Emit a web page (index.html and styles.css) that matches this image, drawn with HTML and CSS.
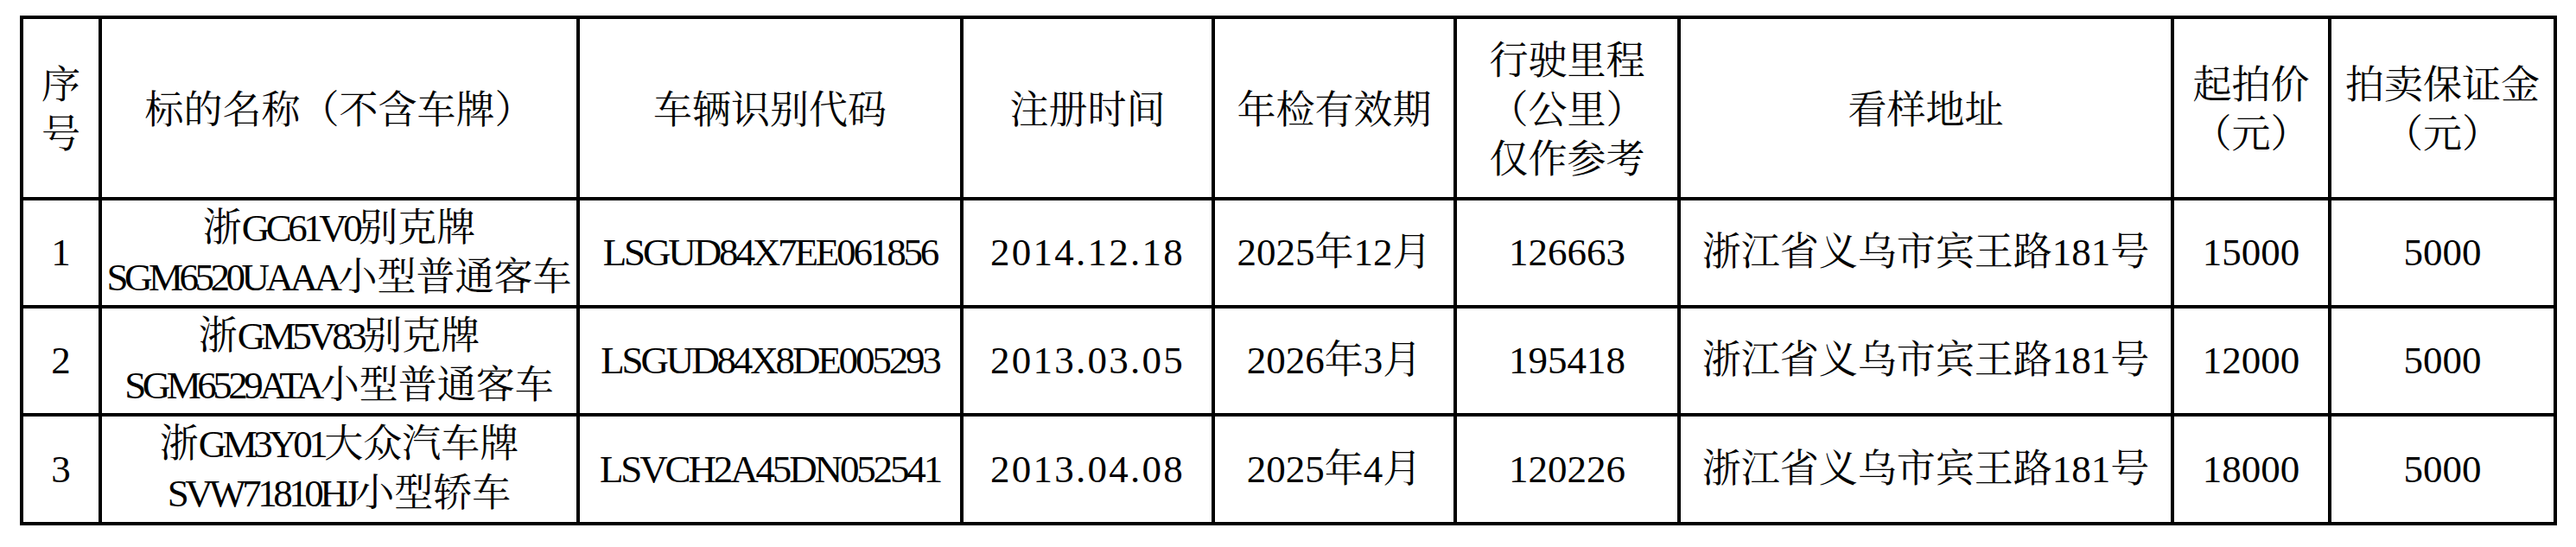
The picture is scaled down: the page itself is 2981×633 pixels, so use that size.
FILE: index.html
```html
<!DOCTYPE html>
<html lang="zh-CN">
<head>
<meta charset="utf-8">
<title>拍卖标的清单</title>
<link rel="stylesheet" href="styles.css">
</head>
<body>
<table class="sheet">
  <colgroup>
    <col class="c-no">
    <col class="c-name">
    <col class="c-vin">
    <col class="c-reg">
    <col class="c-insp">
    <col class="c-km">
    <col class="c-addr">
    <col class="c-price">
    <col class="c-dep">
  </colgroup>
  <thead>
    <tr class="head">
      <th>序<br>号</th>
      <th>标的名称（不含车牌）</th>
      <th>车辆识别代码</th>
      <th>注册时间</th>
      <th>年检有效期</th>
      <th>行驶里程<br>（公里）<br>仅作参考</th>
      <th>看样地址</th>
      <th>起拍价<br>（元）</th>
      <th>拍卖保证金<br>（元）</th>
    </tr>
  </thead>
  <tbody>
    <tr class="row">
      <td>1</td>
      <td>浙<span class="lat">GC61V0</span>别克牌<br><span class="lat">SGM6520UAAA</span>小型普通客车</td>
      <td><span class="vin">LSGUD84X7EE061856</span></td>
      <td class="date">2014.12.18</td>
      <td>2025年12月</td>
      <td>126663</td>
      <td>浙江省义乌市宾王路181号</td>
      <td>15000</td>
      <td>5000</td>
    </tr>
    <tr class="row">
      <td>2</td>
      <td>浙<span class="lat">GM5V83</span>别克牌<br><span class="lat">SGM6529ATA</span>小型普通客车</td>
      <td><span class="vin">LSGUD84X8DE005293</span></td>
      <td class="date">2013.03.05</td>
      <td>2026年3月</td>
      <td>195418</td>
      <td>浙江省义乌市宾王路181号</td>
      <td>12000</td>
      <td>5000</td>
    </tr>
    <tr class="row row-last">
      <td>3</td>
      <td>浙<span class="lat">GM3Y01</span>大众汽车牌<br><span class="lat">SVW71810HJ</span>小型轿车</td>
      <td><span class="vin">LSVCH2A45DN052541</span></td>
      <td class="date">2013.04.08</td>
      <td>2025年4月</td>
      <td>120226</td>
      <td>浙江省义乌市宾王路181号</td>
      <td>18000</td>
      <td>5000</td>
    </tr>
  </tbody>
</table>
</body>
</html>
```

FILE: styles.css
```css
html, body {
  margin: 0;
  background: #ffffff;
}

body {
  padding: 18px 0 0 23px;
  font-family: "Liberation Serif", "Noto Serif CJK SC", "Noto Sans CJK SC", serif;
  color: #000000;
}

.sheet {
  border-collapse: separate;
  border-spacing: 0;
  table-layout: fixed;
  width: 2936px;
  border-top: 4px solid #000;
  border-left: 4px solid #000;
  font-size: 45px;
  line-height: 57px;
}

.sheet th,
.sheet td {
  border-right: 4px solid #000;
  border-bottom: 4px solid #000;
  padding: 0;
  text-align: center;
  vertical-align: middle;
  font-weight: normal;
  white-space: nowrap;
  overflow: hidden;
}

.sheet th {
  padding-top: 6px;
}

.c-no { width: 91px; }
.c-name { width: 553px; }
.c-vin { width: 444px; }
.c-reg { width: 291px; }
.c-insp { width: 280px; }
.c-km { width: 259px; }
.c-addr { width: 571px; }
.c-price { width: 182px; }
.c-dep { width: 261px; }

.head { height: 210px; }
.row { height: 125px; }
.row-last { height: 126px; }

.lat { letter-spacing: -0.1em; }
.vin { letter-spacing: -0.07em; }
.date { letter-spacing: 0.05em; }
```
